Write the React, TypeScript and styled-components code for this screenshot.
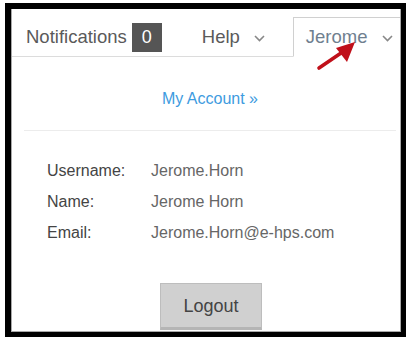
import React from "react";
import styled, { createGlobalStyle } from "styled-components";

const GlobalStyle = createGlobalStyle`
  html, body {
    margin: 0;
    padding: 0;
    background: #fff;
  }
  body {
    font-family: "Liberation Sans", Arial, sans-serif;
  }
`;

const details = [
  { label: "Username:", value: "Jerome.Horn" },
  { label: "Name:", value: "Jerome Horn" },
  { label: "Email:", value: "Jerome.Horn@e-hps.com" },
];

function Chevron() {
  return (
    <ChevronSvg width="11" height="7" viewBox="0 0 11 7">
      <polyline points="1,1 5.5,5.5 10,1" fill="none" stroke="#888" strokeWidth="1.6" />
    </ChevronSvg>
  );
}

export default function App() {
  return (
    <>
      <GlobalStyle />
      <Frame>
        <Panel>
          <TabBar>
            <Tab>
              Notifications <Badge>0</Badge>
            </Tab>
            <Tab $gap={40}>
              Help <Chevron />
            </Tab>
            <ActiveTab>
              Jerome <Chevron />
            </ActiveTab>
          </TabBar>

          <AccountLink>My Account »</AccountLink>
          <Divider />

          <Details>
            {details.map((d) => (
              <Row key={d.label}>
                <Label>{d.label}</Label>
                <Value>{d.value}</Value>
              </Row>
            ))}
          </Details>

          <ButtonRow>
            <LogoutButton>Logout</LogoutButton>
          </ButtonRow>

          <Arrow width="50" height="40" viewBox="0 0 50 40">
            <line x1="8" y1="32" x2="33" y2="15" stroke="#c0101a" strokeWidth="3.6" strokeLinecap="round" />
            <polygon points="44,6 25,12 36,26" fill="#c0101a" />
          </Arrow>
        </Panel>
      </Frame>
    </>
  );
}

const Frame = styled.div`
  margin: 3px 0 0 5px;
  width: 401px;
  height: 334px;
  box-sizing: border-box;
  border-style: solid;
  border-color: #000;
  border-width: 6px 5px 5px 6px;
`;

const Panel = styled.div`
  position: relative;
  box-sizing: border-box;
  width: 390px;
  height: 323px;
  overflow: hidden;
  background: #fff;
  border: 1px solid #a8a8a8;
  border-top: none;
  display: flex;
  flex-direction: column;
`;

const TabBar = styled.div`
  display: flex;
  align-items: flex-end;
  height: 47px;
  border-bottom: 1px solid #dcdcdc;
  flex-shrink: 0;
`;

const Tab = styled.div<{ $gap?: number }>`
  display: flex;
  align-items: center;
  height: 38px;
  margin-left: ${(p) => p.$gap ?? 14}px;
  font-size: 18.5px;
  color: #5a5a5a;
  white-space: nowrap;
`;

const ActiveTab = styled.div`
  display: flex;
  align-items: center;
  height: 38px;
  margin-left: 28px;
  margin-bottom: -1px;
  padding-left: 12px;
  flex: 1;
  background: #fff;
  border: 1px solid #d0d0d0;
  border-bottom: 1px solid #fff;
  border-right: none;
  font-size: 18.5px;
  color: #6f7f8f;
  white-space: nowrap;
`;

const ChevronSvg = styled.svg`
  margin-left: 14px;
  margin-top: 3px;
`;

const Badge = styled.span`
  display: inline-flex;
  align-items: center;
  justify-content: center;
  width: 30px;
  height: 29px;
  margin-left: 5px;
  margin-top: 1px;
  background: #555;
  color: #fff;
  font-size: 18px;
`;

const AccountLink = styled.div`
  margin-top: 32px;
  padding-left: 8px;
  text-align: center;
  font-size: 16px;
  line-height: 20px;
  color: #3d9be0;
`;

const Divider = styled.div`
  height: 1px;
  margin: 21px 4px 0 12px;
  background: #ececec;
`;

const Details = styled.div`
  margin-top: 24px;
  padding-left: 35px;
  display: flex;
  flex-direction: column;
`;

const Row = styled.div`
  display: flex;
  align-items: center;
  height: 31px;
  font-size: 16px;
`;

const Label = styled.span`
  width: 104px;
  color: #444;
`;

const Value = styled.span`
  color: #666;
`;

const ButtonRow = styled.div`
  margin-top: 35px;
  padding-left: 148px;
  display: flex;
`;

const LogoutButton = styled.button`
  width: 102px;
  height: 47px;
  box-sizing: border-box;
  background: #d0d0d0;
  border: 1px solid #bdbdbd;
  border-bottom: 3px solid #b5b5b5;
  font-family: "Liberation Sans", Arial, sans-serif;
  font-size: 18px;
  color: #444;
  padding: 2px 0 0;
`;

const Arrow = styled.svg`
  position: absolute;
  left: 299px;
  top: 27px;
`;
